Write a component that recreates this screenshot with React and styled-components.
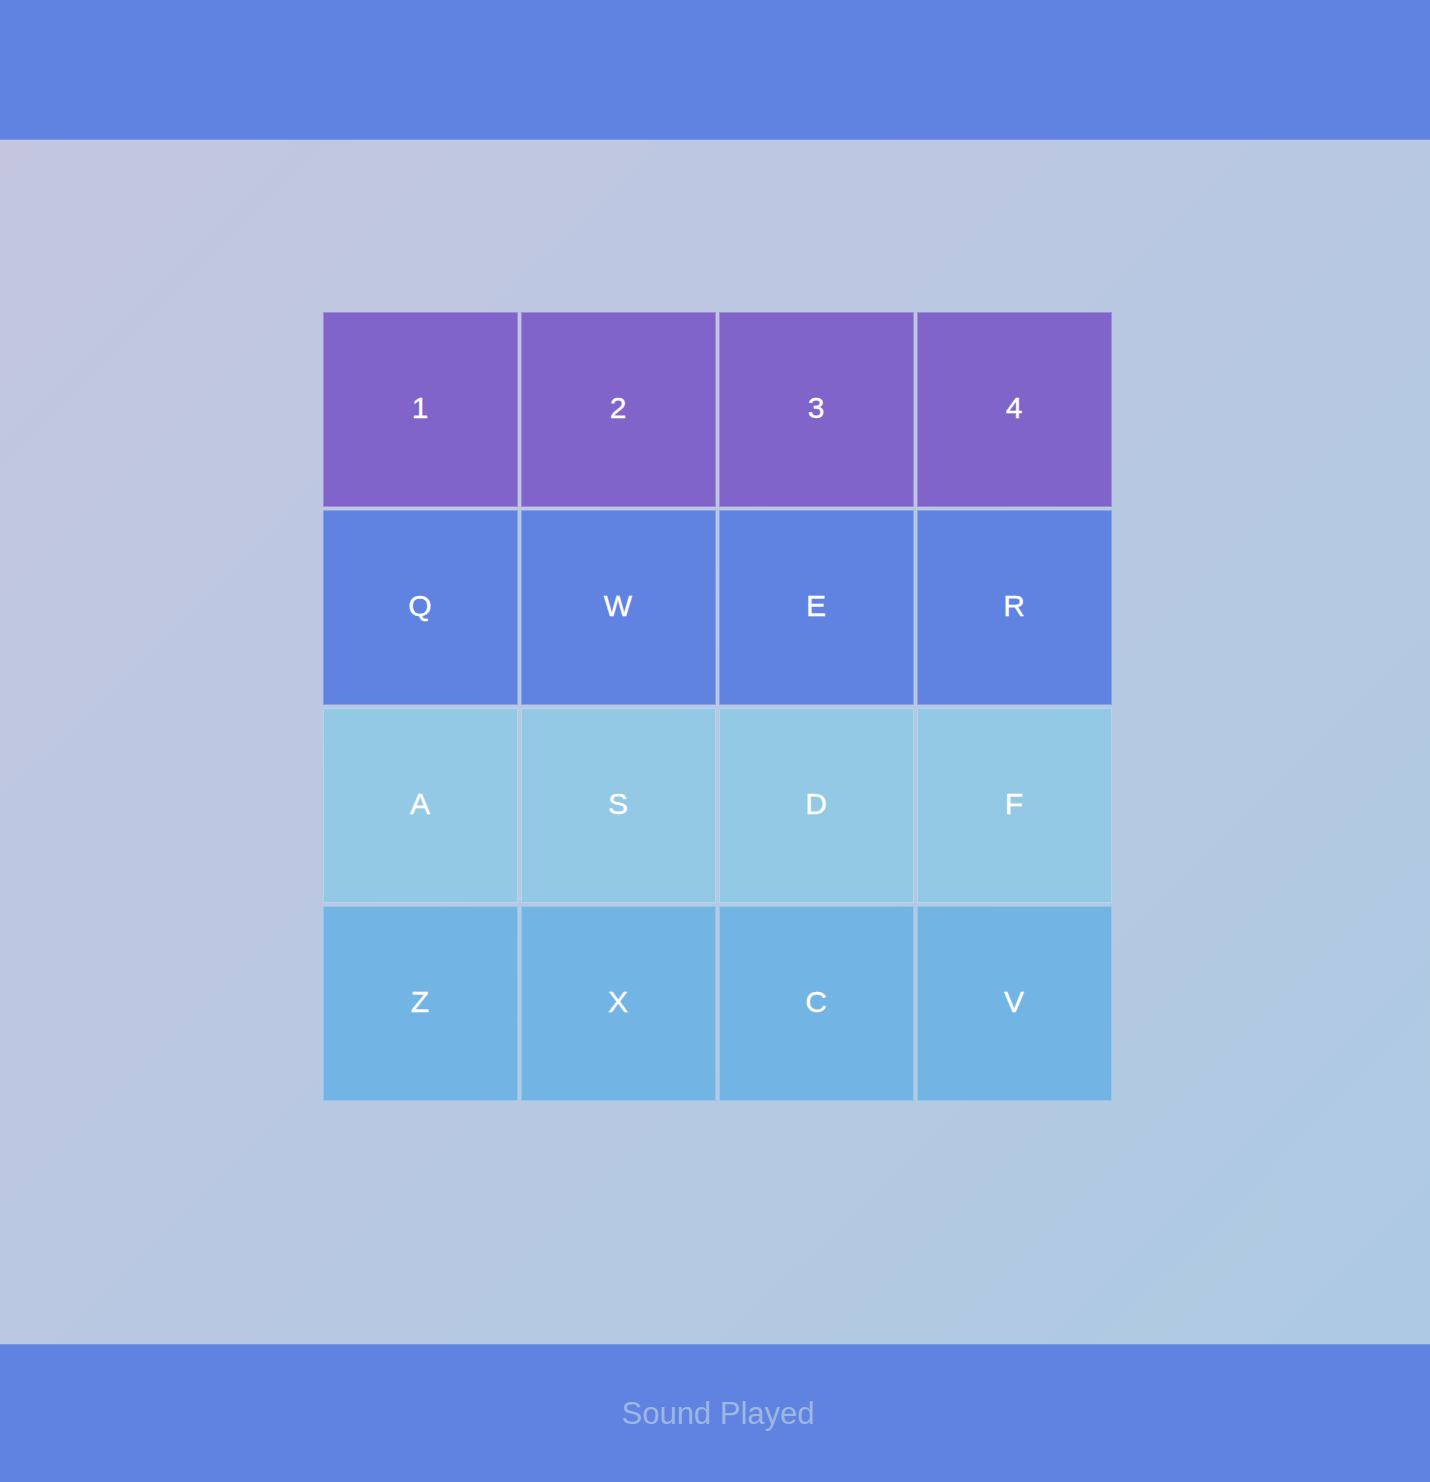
import styled, { createGlobalStyle } from 'styled-components';

const GlobalStyle = createGlobalStyle`
	html, body {
		margin: 0;
		padding: 0;
	}
	body {
		font-family: 'Liberation Sans', Arial, Helvetica, sans-serif;
	}
`;

const rows = [
	{ keys: ['1', '2', '3', '4'], color: '#8064c9' },
	{ keys: ['Q', 'W', 'E', 'R'], color: '#6082e1' },
	{ keys: ['A', 'S', 'D', 'F'], color: '#94c9e6' },
	{ keys: ['Z', 'X', 'C', 'V'], color: '#72b4e4' },
];

const App = () => {
	return (
		<Page>
			<GlobalStyle />
			<TopBar />
			<Main>
				<Pad>
					{rows.map(row =>
						row.keys.map(k => (
							<Key key={k} color={row.color}>
								{k}
							</Key>
						))
					)}
				</Pad>
			</Main>
			<BottomBar>
				<Display>Sound Played</Display>
			</BottomBar>
		</Page>
	);
};

const Page = styled.div`
	width: 1430px;
	height: 1482px;
	display: flex;
	flex-direction: column;
`;

const TopBar = styled.header`
	height: 139px;
	background-color: #6082e1;
	border-bottom: 1px solid #7d96e0;
`;

const Main = styled.main`
	flex: 1;
	display: flex;
	justify-content: center;
	align-items: flex-start;
	padding: 172px 0 0 4px;
	background: linear-gradient(135deg, #c4c6e0 0%, #b9c8e2 50%, #adcae2 100%);
`;

const Pad = styled.div`
	display: grid;
	grid-template-columns: repeat(4, 195px);
	grid-auto-rows: 195px;
	gap: 3px;
`;

const Key = styled.div`
	box-sizing: border-box;
	display: flex;
	align-items: center;
	justify-content: center;
	padding-bottom: 3px;
	background-color: ${props => props.color};
	border: 1px solid rgba(255, 255, 255, 0.25);
	color: #fff;
	font-size: 30px;
	-webkit-text-stroke: 0.3px #fff;
`;

const BottomBar = styled.footer`
	height: 137px;
	display: flex;
	align-items: center;
	justify-content: center;
	padding-left: 6px;
	background-color: #6082e1;
	border-top: 1px solid #7d96e0;
`;

const Display = styled.p`
	margin: 0;
	color: #9cb8e2;
	font-size: 31px;
`;

export default App;
